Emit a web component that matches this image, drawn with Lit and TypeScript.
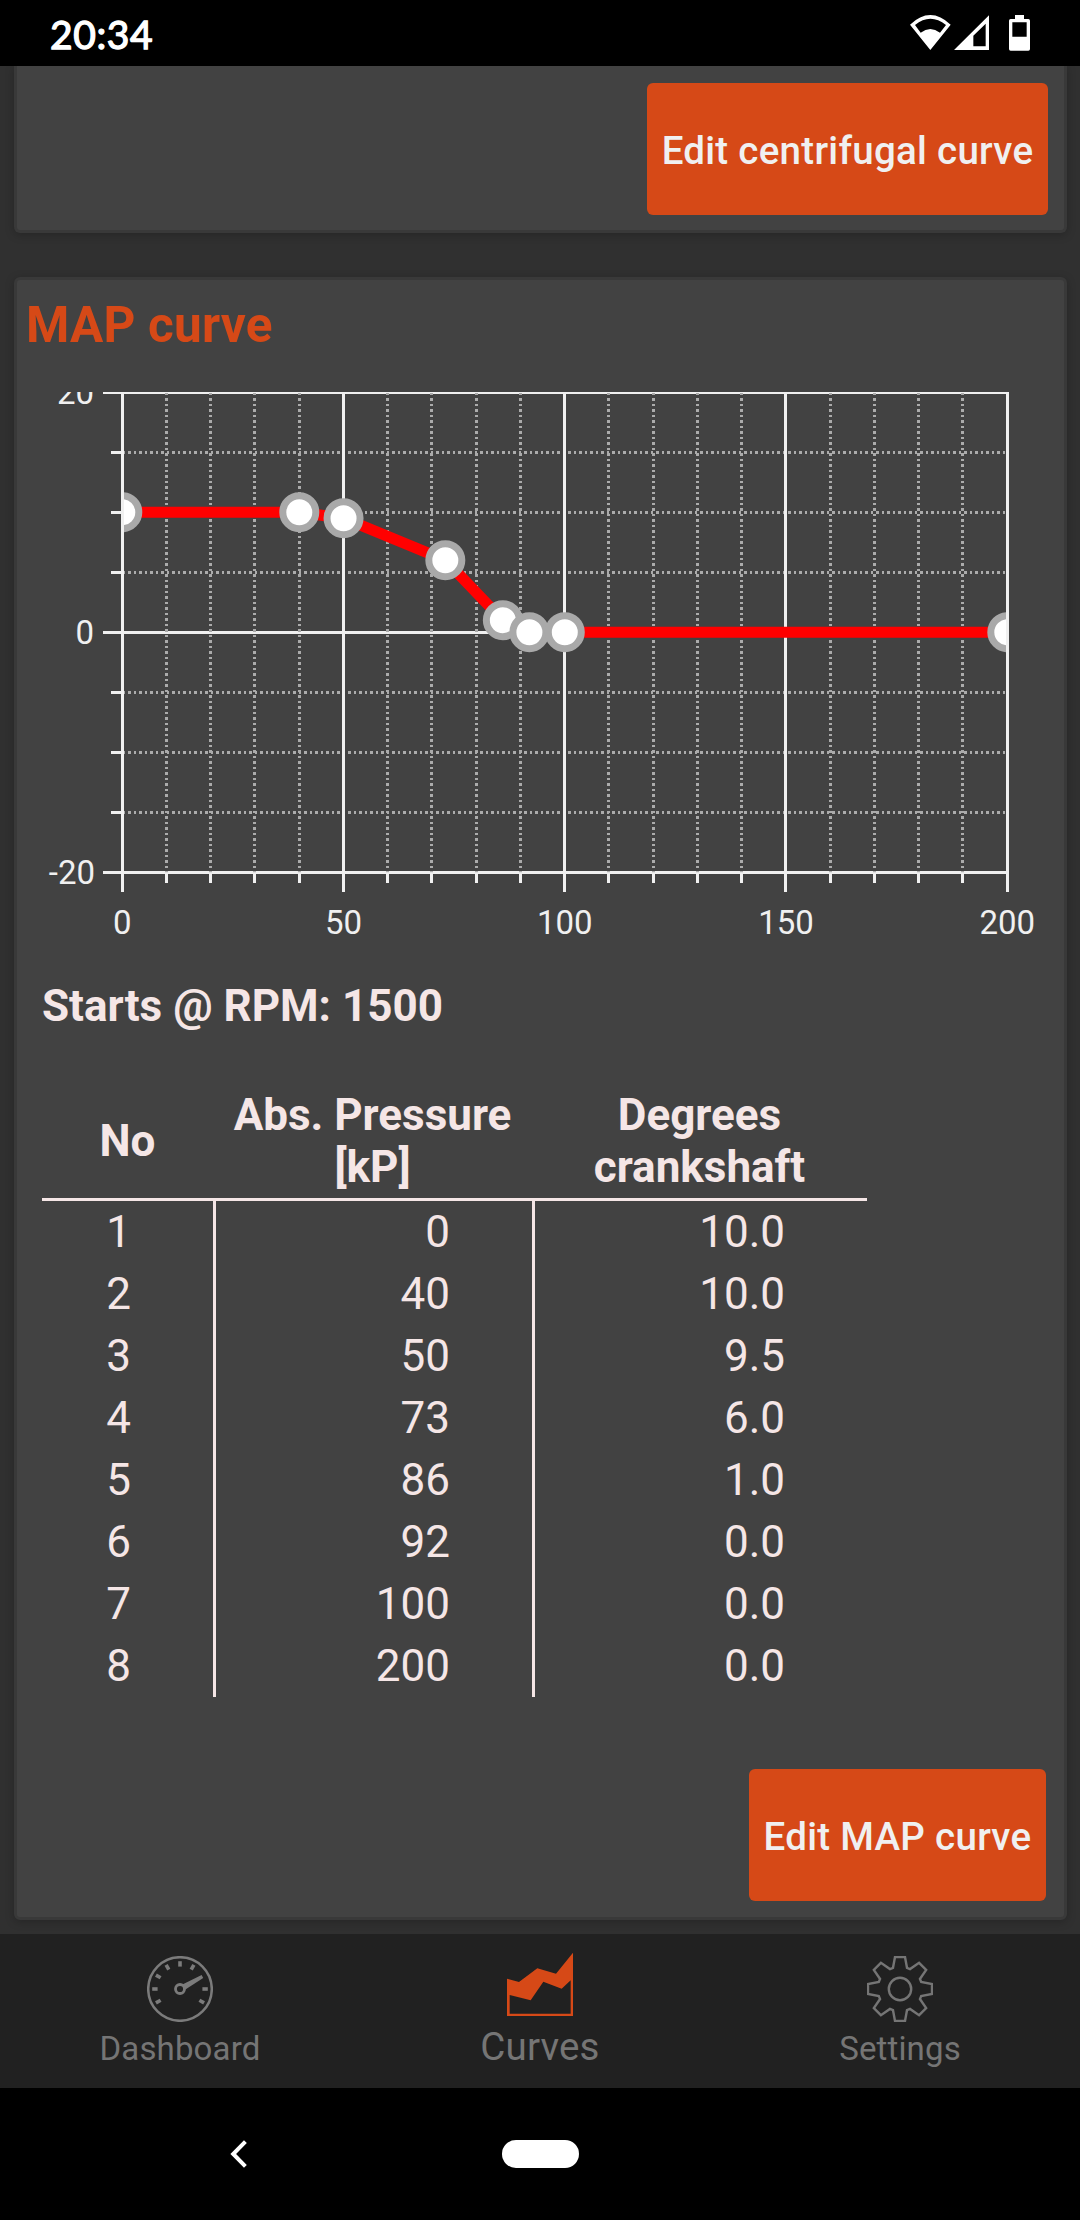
import { LitElement, html, css, svg } from "lit";
import { customElement, property } from "lit/decorators.js";

interface CurvePoint {
  kpa: number;
  degrees: number;
}

const POINTS: CurvePoint[] = [
  { kpa: 0, degrees: 10 },
  { kpa: 40, degrees: 10 },
  { kpa: 50, degrees: 9.5 },
  { kpa: 73, degrees: 6 },
  { kpa: 86, degrees: 1 },
  { kpa: 92, degrees: 0 },
  { kpa: 100, degrees: 0 },
  { kpa: 200, degrees: 0 },
];

/* Plot geometry, in chart units (1 unit = 1px) */
const LEFT = 105.5;
const TOP = 0.5;
const X_STEP = 44.25;
const Y_STEP = 60;
const BOTTOM = TOP + 8 * Y_STEP;
const RIGHT = LEFT + 20 * X_STEP;
const snap = (v: number) => Math.floor(v) + 0.5;
const xOf = (kpa: number) => LEFT - 0.2 + (kpa / 10) * X_STEP;
const yOf = (deg: number) => TOP - 0.3 + ((20 - deg) / 5) * Y_STEP;

@customElement("map-chart")
export class MapChart extends LitElement {
  static styles = css`
    :host { display: block; }
    .chart { display: block; width: 1047px; height: 558px; overflow: hidden; }
    .major { stroke: #f0f0f0; stroke-width: 3; }
    .minor { stroke: #ababab; stroke-width: 3; stroke-dasharray: 3 3 2 3; }
    .curve { fill: none; stroke: #ff0000; stroke-width: 11; }
    .marker { fill: #ffffff; stroke: #a9a9a9; stroke-width: 7; }
    .label { fill: #f0f0f0; font: 400 33px Roboto, sans-serif; }
  `;

  @property({ attribute: false }) points: CurvePoint[] = [];

  private column(i: number) {
    const x = snap(LEFT + i * X_STEP - 0.3 + (i === 20 ? 0.3 : 0));
    return i % 5 === 0
      ? svg`<line class="major" x1=${x} x2=${x} y1="0" y2=${BOTTOM + 19.5}></line>`
      : svg`
        <line class="minor" x1=${x} x2=${x} y1="-5" y2=${BOTTOM}></line>
        <line class="major" x1=${x} x2=${x} y1=${BOTTOM} y2=${BOTTOM + 10.5}></line>`;
  }

  private row(i: number) {
    const y = TOP + i * Y_STEP;
    return i % 4 === 0
      ? svg`<line class="major" x1="86" x2=${RIGHT + 1.5} y1=${y} y2=${y}></line>`
      : svg`
        <line class="minor" x1="100" x2=${RIGHT} y1=${y} y2=${y}></line>
        <line class="major" x1="94" x2=${LEFT} y1=${y} y2=${y}></line>`;
  }

  render() {
    const columns = Array.from({ length: 21 }, (_, i) => i);
    const rows = Array.from({ length: 9 }, (_, i) => i);
    const line = this.points.map((p) => `${xOf(p.kpa)},${yOf(p.degrees)}`).join(" ");
    return html`
      <svg class="chart" viewBox="0 0 1047 558">
        <defs>
          <clipPath id="plot"><rect x="107" y="0" width="882" height="480"></rect></clipPath>
        </defs>
        ${rows.map((i) => this.row(i))}
        ${columns.map((i) => this.column(i))}
        <g clip-path="url(#plot)">
          <polyline class="curve" points=${line}></polyline>
          ${this.points.map(
            (p) => svg`<circle class="marker" cx=${xOf(p.kpa)} cy=${yOf(p.degrees)} r="16.5"></circle>`
          )}
        </g>
        ${[20, 0, -20].map(
          (v) => svg`<text class="label" text-anchor="end" x=${v < 0 ? 78 : 77} y=${yOf(v) + 11.8}>${v}</text>`
        )}
        ${[0, 50, 100, 150, 200].map(
          (v) => svg`<text class="label" text-anchor="middle" x=${xOf(v)} y="542">${v}</text>`
        )}
      </svg>
    `;
  }
}

const rad = (deg: number) => (deg * Math.PI) / 180;

const gearPoints = Array.from({ length: 8 }, (_, k) => {
  const a = rad(k * 45);
  return [[-7, -21.2], [-5, -32], [5, -32], [7, -21.2]]
    .map(([x, y]) => {
      const px = 33 + x * Math.cos(a) - y * Math.sin(a);
      const py = 33 + x * Math.sin(a) + y * Math.cos(a);
      return `${px.toFixed(2)},${py.toFixed(2)}`;
    })
    .join(" ");
}).join(" ");

const gaugeIcon = html`
  <svg class="icon" viewBox="0 0 66 66" fill="none" stroke="#7b7b7b">
    <circle cx="33" cy="33" r="31.8" stroke-width="2.5"></circle>
    ${[0, 60, 90, 120, 150, 180, 210, -30].map((d) => {
      const c = Math.cos(rad(d));
      const s = Math.sin(rad(d));
      return svg`<line stroke-width="3.6" x1=${33 + 22.4 * c} y1=${33 - 22.4 * s} x2=${33 + 27.8 * c} y2=${33 - 27.8 * s}></line>`;
    })}
    <circle cx="33" cy="33" r="4.5" stroke-width="2.8"></circle>
    <path d="M35.4 28.4 L54.6 18.9 L56.2 22 L38.4 33.4 Z" fill="#7b7b7b" stroke="none"></path>
  </svg>
`;

const curvesIcon = html`
  <svg class="icon" viewBox="51 30 198 198">
    <path
      fill="#d64917"
      fill-rule="evenodd"
      d="M51 116 L87 126 L142 85 L198 101 L249 38 V228 H51 Z M59 165 V221 H242 V121 L215 146 L160 125 L122 181 Z"
    ></path>
  </svg>
`;

const gearIcon = html`
  <svg class="icon" viewBox="0 0 66 66" fill="none" stroke="#757575" stroke-width="2.4">
    <polygon points=${gearPoints}></polygon>
    <circle cx="33" cy="33" r="11.2"></circle>
  </svg>
`;

@customElement("app-root")
export class AppRoot extends LitElement {
  static styles = css`
    :host {
      display: flex;
      flex-direction: column;
      width: 1080px;
      height: 2220px;
      overflow: hidden;
      background: #303030;
      font-family: Roboto, sans-serif;
      color: #f5e6e6;
    }
    * { box-sizing: border-box; }
    .status {
      flex: none;
      height: 66px;
      background: #000;
      display: flex;
      justify-content: space-between;
      padding: 14px 50px 0 50px;
    }
    .clock {
      font: 400 39px/40px Lato, sans-serif;
      letter-spacing: 0.6px;
      -webkit-text-stroke: 1.3px #fff;
      color: #fff;
    }
    .signals { width: 120px; height: 36px; margin-top: 1px; display: block; }
    .content {
      flex: 1;
      min-height: 0;
      overflow: hidden;
      padding: 0 13px 0 14px;
      display: flex;
      flex-direction: column;
      gap: 44px;
    }
    .card {
      flex: none;
      background: #424242;
      border: 3px solid #393939;
      border-radius: 6px;
      box-shadow: 0 2px 10px rgba(0, 0, 0, 0.22);
      display: flex;
      flex-direction: column;
    }
    .card.partial {
      border-top: 0;
      border-top-left-radius: 0;
      border-top-right-radius: 0;
      padding: 17px 16px 15px 0;
    }
    .card.map { padding: 15px 0 16px; }
    .title {
      margin: 0 0 37px 9px;
      font-size: 49.5px;
      line-height: 60px;
      font-weight: 700;
      letter-spacing: 0.2px;
      color: #d64917;
    }
    .starts {
      margin: 30px 0 57px 25px;
      font-size: 44px;
      line-height: 52px;
      font-weight: 700;
    }
    .table { margin-left: 25px; width: 825px; font-size: 44px; }
    .head, .row {
      display: grid;
      grid-template-columns: 171px 319px 335px;
    }
    .head {
      font-weight: 700;
      line-height: 52px;
      text-align: center;
      align-items: center;
      padding-bottom: 5px;
      border-bottom: 3px solid #f5e6e6;
    }
    .row { line-height: 62px; text-align: right; }
    .no { text-align: center; padding-right: 18px; }
    .value { border-left: 3px solid #f5e6e6; padding-right: 82px; }
    .button {
      align-self: flex-end;
      height: 132px;
      border: 0;
      border-radius: 6px;
      background: #d64917;
      color: #f0f0f0;
      font: 500 38.5px/46px Roboto, sans-serif;
      letter-spacing: 0.28px;
      padding: 3px 0 0;
      white-space: nowrap;
    }
    .button.centrifugal { width: 401px; }
    .button.edit-map { width: 297px; margin: 72px 18px 0 0; }
    .tabs {
      flex: none;
      height: 154px;
      background: #212121;
      display: grid;
      grid-template-columns: repeat(3, 1fr);
    }
    .tab {
      display: flex;
      flex-direction: column;
      align-items: center;
      gap: 7px;
      padding-top: 22px;
      font-size: 33px;
      line-height: 40px;
      letter-spacing: 0.15px;
      color: #757575;
    }
    .tab.active {
      padding-top: 16px;
      gap: 8px;
      font-size: 38.5px;
      line-height: 46px;
    }
    .icon { width: 66px; height: 66px; display: block; }
    .navbar {
      flex: none;
      height: 132px;
      background: #000;
      display: grid;
      grid-template-columns: 502px 77px 1fr;
      align-items: center;
    }
    .back { width: 18px; height: 28px; margin-left: 230px; display: block; }
    .home { height: 28px; border-radius: 14px; background: #fff; }
  `;

  render() {
    return html`
      <div class="status">
        <div class="clock">20:34</div>
        <svg class="signals" viewBox="930 45 360 108" fill="#fff" fill-rule="evenodd">
          <path d="M930 74 Q991 16 1052 74 L991 150 Z M945 75 Q991 37 1038 75 L1020 98 Q991 76 962 98 Z"></path>
          <path d="M1062 150 L1167 46 V150 Z M1157 71 L1120 107 V139 H1157 Z"></path>
          <path d="M1245 45 H1272 V57 H1285 Q1290 57 1290 62 V147 Q1290 152 1285 152 H1232 Q1227 152 1227 147 V62 Q1227 57 1232 57 H1245 Z M1237 67 V110 H1280 V67 Z"></path>
        </svg>
      </div>
      <div class="content">
        <section class="card partial">
          <button class="button centrifugal">Edit centrifugal curve</button>
        </section>
        <section class="card map">
          <h2 class="title">MAP curve</h2>
          <map-chart .points=${POINTS}></map-chart>
          <div class="starts">Starts @ RPM: 1500</div>
          <div class="table">
            <div class="head">
              <div>No</div>
              <div>Abs. Pressure<br />[kP]</div>
              <div>Degrees<br />crankshaft</div>
            </div>
            ${POINTS.map(
              (p, i) => html`
                <div class="row">
                  <div class="no">${i + 1}</div>
                  <div class="value">${p.kpa}</div>
                  <div class="value">${p.degrees.toFixed(1)}</div>
                </div>
              `
            )}
          </div>
          <button class="button edit-map">Edit MAP curve</button>
        </section>
      </div>
      <nav class="tabs">
        <div class="tab">${gaugeIcon}<span>Dashboard</span></div>
        <div class="tab active">${curvesIcon}<span>Curves</span></div>
        <div class="tab">${gearIcon}<span>Settings</span></div>
      </nav>
      <div class="navbar">
        <svg class="back" viewBox="0 0 18 28" fill="none" stroke="#fff" stroke-width="4">
          <path d="M15.4 1.6 L3.2 14 L15.4 26.4"></path>
        </svg>
        <div class="home"></div>
      </div>
    `;
  }
}
